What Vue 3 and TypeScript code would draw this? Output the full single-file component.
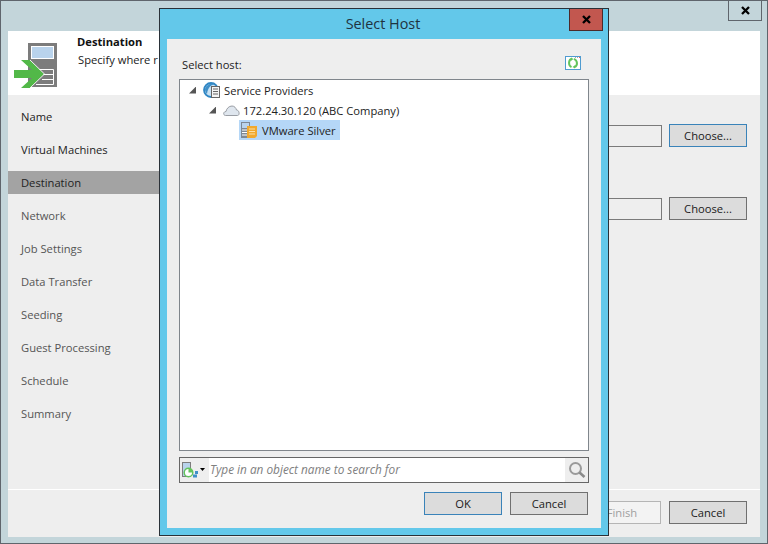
<script setup lang="ts">
const steps: string[] = ['Name', 'Virtual Machines', 'Destination', 'Network', 'Job Settings', 'Data Transfer', 'Seeding', 'Guest Processing', 'Schedule', 'Summary']
</script>

<template>
  <div class="window">
    <div class="titlebar">
      <button class="close main-close">
        <svg width="13" height="11" viewBox="0 0 13 11"><path d="M3 2 10 9M10 2 3 9" stroke="#000" stroke-width="2.3" fill="none" /></svg>
      </button>
    </div>
    <div class="client">
      <header class="head">
        <svg class="wizard-icon" width="44" height="46" viewBox="0 0 44 46">
          <rect x="14" y="0" width="29" height="44" fill="#7c7c7c" />
          <rect x="17.5" y="3.500" width="22" height="12" fill="#b9d3ec" stroke="#fff" />
          <path d="M22 26.500H39.500V41.500H22M28 31.500H39.500M28 36.500H39.500" fill="none" stroke="#fff" />
          <path d="M7 17H16L30 31 16 45H7L18 35H0V27H18Z" fill="#52b848" />
          <path d="M16 17 30.500 31 16 45" fill="none" stroke="#fff" stroke-width="0.9" />
        </svg>
        <div class="head-text">
          <div class="head-title">Destination</div>
          <div class="head-sub">Specify where r</div>
        </div>
      </header>
      <div class="body">
        <nav class="steps">
          <div v-for="s in steps" :key="s" class="step" :class="{ active: s === 'Destination', strong: s === 'Name' || s === 'Virtual Machines' }">{{ s }}</div>
        </nav>
        <main class="form">
          <div class="field first">
            <div class="input"></div>
            <button class="btn focus">Choose...</button>
          </div>
          <div class="field second">
            <div class="input"></div>
            <button class="btn">Choose...</button>
          </div>
        </main>
      </div>
      <footer class="foot">
        <button class="btn disabled">Finish</button>
        <button class="btn">Cancel</button>
      </footer>
    </div>

    <section class="dialog">
      <div class="dlg-title">
        <span>Select Host</span>
        <button class="close dlg-close">
          <svg width="13" height="11" viewBox="0 0 13 11"><path d="M3 2 10 9M10 2 3 9" stroke="#000" stroke-width="2.3" fill="none" /></svg>
        </button>
      </div>
      <div class="dlg-client">
        <div class="dlg-label">
          <span>Select host:</span>
          <svg class="refresh" width="16" height="14" viewBox="0 0 16 14">
            <rect x="0.5" y="0.5" width="15" height="13" fill="#fff" stroke="#4f9bd0" />
            <path d="M7 2.800C3.300 3.500 3 9.500 6.500 11.200" fill="none" stroke="#62c45c" stroke-width="2" />
            <path d="M9 2.800C12.700 4.500 13 9.500 9.500 11.200" fill="none" stroke="#62c45c" stroke-width="2" />
            <path d="M6 1.500 8.500 3 6 4.800ZM10 12.500 7.500 11 10 9.200Z" fill="#62c45c" />
            <path d="M10 1.500H11M12 1.500H13" stroke="#a8a8a8" />
            <path d="M14 1H15V2H14Z" fill="#e06060" />
          </svg>
        </div>
        <div class="tree">
          <div class="row lvl0">
            <span class="tri"></span>
            <svg width="18" height="18" viewBox="0 0 18 18">
              <circle cx="8" cy="9" r="7" fill="#c9e2f4" stroke="#2f86c4" stroke-width="1.800" />
              <path d="M2 8C3 4 7 2 12 3 8 4 5 6 4 13 2.500 11.500 2 10 2 8Z" fill="#3f8fc8" />
              <rect x="8.500" y="5.500" width="8" height="11" fill="#f4f4f4" stroke="#666" />
              <path d="M10 8H15M10 10.500H15M10 13H15" stroke="#666" />
            </svg>
            <span class="lbl">Service Providers</span>
          </div>
          <div class="row lvl1">
            <span class="tri"></span>
            <svg width="17" height="14" viewBox="0 0 17 14">
              <path d="M2.500 12.500C0 12.500 0 8.500 3 8.500 3.500 5.500 6 3 9 3 11.500 3 13 5 13.500 7 16.500 7 17 12.500 14.500 12.500Z" fill="#dfe6ee" stroke="#9a9ea4" />
            </svg>
            <span class="lbl">172.24.30.120 (ABC Company)</span>
          </div>
          <div class="row lvl2">
            <div class="selected">
              <svg width="18" height="18" viewBox="0 0 18 18">
                <rect x="1" y="1" width="9" height="16" fill="#7d8894" />
                <rect x="2" y="2" width="7" height="5" fill="#b9d3ec" />
                <path d="M2 9H8M2 11.500H8M2 14H8" stroke="#fff" />
                <path d="M7 5H17V15L15 17H7Z" fill="#f1a92e" />
                <path d="M9 8H15M9 10.500H15M9 13H15" stroke="#fbe0a4" />
              </svg>
              <span class="lbl">VMware Silver</span>
            </div>
          </div>
        </div>
        <div class="search">
          <div class="filter">
            <svg width="26" height="24" viewBox="0 0 26 24">
              <rect x="2.500" y="4.500" width="8" height="14" fill="#b9d3ec" stroke="#7d7d7d" />
              <circle cx="8.500" cy="14.500" r="4.300" fill="#fff" stroke="#62c45c" stroke-width="1.500" />
              <path d="M8.500 10.500A4 4 0 0 1 12.500 14.500H8.500Z" fill="#62c45c" />
              <rect x="15" y="13" width="3" height="3" fill="#3f8fc8" />
              <rect x="13" y="16.500" width="4" height="3" fill="#3f8fc8" />
              <path d="M20 10H25L22.500 13Z" fill="#000" />
            </svg>
          </div>
          <span class="placeholder">Type in an object name to search for</span>
          <div class="magnifier">
            <svg width="18" height="18" viewBox="0 0 18 18">
              <circle cx="7.500" cy="7.500" r="5.500" fill="none" stroke="#9a9a9a" stroke-width="2" />
              <path d="M11.500 11.500 16.500 16" stroke="#8a8a8a" stroke-width="2.600" />
            </svg>
          </div>
        </div>
        <div class="dlg-actions">
          <button class="btn focus">OK</button>
          <button class="btn">Cancel</button>
        </div>
      </div>
    </section>
  </div>
</template>

<style>
html, body { margin: 0; padding: 0; }
</style>

<style scoped>
* { box-sizing: border-box; }
.window {
  position: relative;
  width: 768px;
  height: 544px;
  overflow: hidden;
  display: flex;
  flex-direction: column;
  background: #c3d5da;
  border: 1px solid #5f656c;
  font-family: "Open Sans", "Noto Sans", sans-serif;
  font-size: 11.2px;
  color: #1a1a1a;
}
.titlebar { height: 30px; display: flex; justify-content: flex-end; flex: none; padding-right: 5px; }
.close { display: flex; align-items: center; justify-content: center; padding: 0; font: inherit; }
.main-close { width: 34px; height: 21px; margin-top: -1px; background: #c3d5da; border: 1px solid #5f656c; }
.client {
  width: 752px;
  height: 506px;
  margin-left: 7px;
  display: flex;
  flex-direction: column;
  background: #eeeeee;
}
.head { height: 64px; flex: none; display: flex; background: #fff; }
.wizard-icon { margin: 12px 0 0 6px; }
.head-text { margin-left: 19px; padding-top: 2px; }
.head-title { font-weight: 700; line-height: 17px; color: #111; }
.head-sub { line-height: 20px; margin-left: 1px; white-space: nowrap; }
.body { flex: 1; display: flex; min-height: 0; }
.steps { width: 151px; flex: none; padding-top: 10px; display: flex; flex-direction: column; gap: 10px; }
.step { height: 23px; line-height: 24px; padding-left: 13px; color: #555; }
.step.strong { color: #222; }
.step.active { background: #a3a3a3; color: #222; }
.form { flex: 1; padding-left: 200px; }
.field { display: flex; gap: 7px; align-items: center; justify-content: flex-end; padding-right: 13px; }
.field.first { margin-top: 29px; }
.field.second { margin-top: 50px; }
.input { width: 300px; height: 22px; background: #eeeeee; border: 1px solid #7a7a7a; }
.btn {
  width: 78px;
  height: 23px;
  padding: 0;
  background: #dcdcdc;
  border: 1px solid #707070;
  font: inherit;
  color: #1a1a1a;
}
.btn.focus { border-color: #3a83b9; }
.btn.disabled { background: #f3f3f3; border-color: #b5b5b5; color: #a0a0a0; }
.foot {
  height: 48px;
  flex: none;
  display: flex;
  justify-content: flex-end;
  gap: 8px;
  padding: 11px 13px 0 0;
  border-top: 1px solid #fff;
}
.dialog {
  position: absolute;
  left: 158px;
  top: 7px;
  width: 450px;
  height: 528px;
  background: #63c8ea;
  border: 1px solid #2a3138;
  display: flex;
  flex-direction: column;
}
.dlg-title {
  position: relative;
  height: 30px;
  flex: none;
  text-align: center;
  line-height: 30px;
  font-size: 14.4px;
  padding-right: 2px;
  color: #1f3340;
}
.dlg-close {
  position: absolute;
  right: 5px;
  top: 0;
  width: 34px;
  height: 22px;
  background: #c2574f;
  border: 1px solid #4c2a2a;
  border-top: none;
}
.dlg-client {
  width: 434px;
  height: 489px;
  margin-left: 7px;
  padding: 0 12px;
  background: #eeeeee;
  display: flex;
  flex-direction: column;
}
.dlg-label {
  height: 40px;
  flex: none;
  display: flex;
  justify-content: space-between;
  padding: 17px 8px 0 3px;
  line-height: 17px;
  color: #222;
}
.tree {
  width: 410px;
  height: 372px;
  flex: none;
  background: #fff;
  border: 1px solid #80868c;
}
.row { height: 20px; display: flex; align-items: center; white-space: nowrap; color: #222; }
.row.lvl0 { padding-left: 9px; }
.row.lvl1 { padding-left: 29px; }
.row.lvl2 { padding-left: 59px; }
.tri {
  width: 7px;
  height: 7px;
  flex: none;
  margin-right: 7px;
  background: #555;
  clip-path: polygon(100% 0, 100% 100%, 0 100%);
}
.lbl { margin-left: 3px; }
.selected { display: flex; align-items: center; height: 20px; width: 101px; background: #b5d7f7; padding-left: 1px; }
.selected .lbl { margin-left: 4px; }
.search {
  width: 410px;
  height: 26px;
  margin-top: 6px;
  flex: none;
  display: flex;
  align-items: center;
  background: #fff;
  border: 1px solid #666;
}
.filter { width: 29px; height: 24px; background: #eeeeee; flex: none; }
.placeholder { flex: 1; font-style: italic; font-size: 11.8px; color: #808080; padding-left: 1px; margin-top: -2px; }
.magnifier { width: 23px; height: 24px; background: #eeeeee; display: flex; align-items: center; justify-content: center; flex: none; }
.dlg-actions { display: flex; justify-content: flex-end; gap: 8px; margin-top: 9px; padding-right: 1px; }
</style>
